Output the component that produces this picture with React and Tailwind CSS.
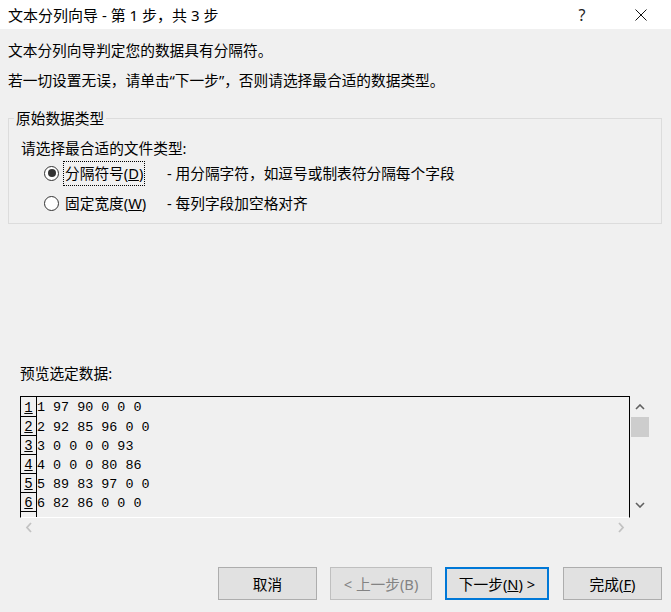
import React from 'react'

const rows = ['1 97 90 0 0 0', '2 92 85 96 0 0', '3 0 0 0 0 93', '4 0 0 0 80 86', '5 89 83 97 0 0', '6 82 86 0 0 0', '']

const Radio = ({ checked }) => (
  <span className="w-[15px] h-[15px] rounded-full border border-[#333] bg-white flex items-center justify-center shrink-0">
    {checked && <span className="w-[8px] h-[8px] rounded-full bg-[#333]" />}
  </span>
)

const Chevron = ({ dir, color }) => {
  const d = {
    up: 'M1 5 L5 1 L9 5',
    down: 'M1 1 L5 5 L9 1',
  }[dir]
  return (
    <svg width="10" height="6" viewBox="0 0 10 6" fill="none">
      <path d={d} stroke={color} strokeWidth="1.6" />
    </svg>
  )
}

const App = () => {
  return (
    <div className="w-[671px] h-[612px] bg-[#f0f0f0] text-black text-[14.7px] overflow-hidden flex flex-col font-['Noto_Sans','Noto_Sans_CJK_SC',sans-serif]">
      {/* title bar */}
      <div className="h-[29px] bg-white flex items-center shrink-0">
        <span className="pl-2 leading-[20px] text-[15px]">文本分列向导 - 第 1 步，共 3 步</span>
        <div className="ml-auto flex items-center h-full">
          <div className="w-[58px] flex justify-center text-[16px] text-[#222] leading-none">?</div>
          <div className="w-[60px] flex justify-center">
            <svg width="12" height="12" viewBox="0 0 12 12">
              <path d="M0.5 0.5 L11.5 11.5 M11.5 0.5 L0.5 11.5" stroke="#111" strokeWidth="1" />
            </svg>
          </div>
        </div>
      </div>

      <p className="mt-[11px] ml-2 leading-[20px]">文本分列向导判定您的数据具有分隔符。</p>
      <p className="mt-[10px] ml-2 leading-[20px]">若一切设置无误，请单击“下一步”，否则请选择最合适的数据类型。</p>

      {/* group box */}
      <fieldset className="mt-[18px] ml-2 w-[654px] border border-[#dcdcdc] pl-[12px] pb-[5px]">
        <legend className="ml-[-7px] px-[2px] leading-[20px]">原始数据类型</legend>
        <div className="mt-[10px] leading-[20px]">请选择最合适的文件类型:</div>
        <div className="h-[30px] flex items-center">
          <span className="ml-[23px]"><Radio checked /></span>
          <span className="w-[108px] pl-[4px] flex">
            <span className="h-[25px] px-[1px] border border-dotted border-black flex items-center leading-[20px]">
              分隔符号(<u>D</u>)
            </span>
          </span>
          <span className="leading-[20px]">- 用分隔字符，如逗号或制表符分隔每个字段</span>
        </div>
        <div className="h-[30px] flex items-center">
          <span className="ml-[23px]"><Radio /></span>
          <span className="w-[108px] pl-[6px] leading-[20px]">固定宽度(<u>W</u>)</span>
          <span className="leading-[20px]">- 每列字段加空格对齐</span>
        </div>
      </fieldset>

      <div className="mt-[139px] ml-[20px] leading-[20px]">预览选定数据:</div>

      {/* preview */}
      <div className="mt-[13px] ml-[20px] flex">
        <div className="w-[610px] h-[122px] border-t border-l border-r border-black border-b border-b-white overflow-hidden font-['Liberation_Mono',monospace] text-[13.4px]">
          {rows.map((r, i) => (
            <div key={i} className={`flex ${i === 0 ? 'h-[20px]' : 'h-[19px]'} shrink-0`}>
              <div className="w-[16px] border-r border-b border-black flex items-end justify-center leading-[14px] pb-[1px] text-[14px]">
                {r && <u>{i + 1}</u>}
              </div>
              <div className="flex items-center pt-[2px] leading-[16px] whitespace-pre">{r}</div>
            </div>
          ))}
        </div>
        <div className="w-[19px] h-[122px] flex flex-col items-center">
          <div className="h-[21px] w-full flex items-center justify-center pl-[1px]">
            <Chevron dir="up" color="#606060" />
          </div>
          <div className="ml-[1px] w-[18px] h-[20px] bg-[#cdcdcd]" />
          <div className="flex-1" />
          <div className="h-[21px] w-full flex items-center justify-center pl-[1px] pb-[6px]">
            <Chevron dir="down" color="#606060" />
          </div>
        </div>
      </div>
      <div className="ml-[20px] w-[610px] h-[18px] flex items-center justify-between px-[5px]">
        <svg width="8" height="11" viewBox="0 0 8 11" fill="none">
          <path d="M6 1 L2 5.5 L6 10" stroke="#c2c2c2" strokeWidth="1.8" />
        </svg>
        <svg width="8" height="11" viewBox="0 0 8 11" fill="none">
          <path d="M2 1 L6 5.5 L2 10" stroke="#c2c2c2" strokeWidth="1.8" />
        </svg>
      </div>

      {/* buttons */}
      <div className="mt-[31px] ml-[218px] flex items-center">
        <button className="w-[99px] h-[33px] bg-[#e1e1e1] border border-[#adadad] leading-[20px]">取消</button>
        <button className="ml-[13px] w-[102px] h-[33px] bg-[#e1e1e1] border border-[#bfbfbf] text-[#838383] leading-[20px]">&lt; 上一步(B)</button>
        <button className="ml-[13px] w-[104px] h-[33px] bg-[#e1e1e1] border-2 border-[#0078d7] leading-[20px]">下一步(<u>N</u>) &gt;</button>
        <button className="ml-[14px] w-[99px] h-[33px] bg-[#e1e1e1] border border-[#adadad] leading-[20px]">完成(<u>F</u>)</button>
      </div>
    </div>
  )
}

export default App
